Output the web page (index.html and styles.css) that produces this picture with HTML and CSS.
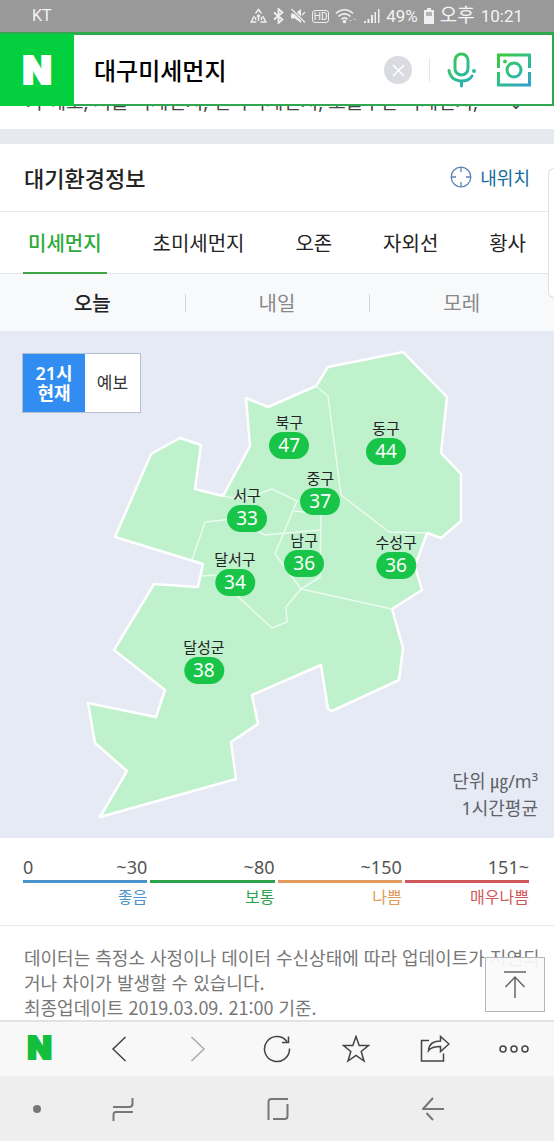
FILE: index.html
```html
<!DOCTYPE html>
<html lang="ko">
<head>
    <meta charset="UTF-8">
    <meta name="viewport" content="width=device-width, initial-scale=1.0">
    <title>대구미세먼지</title>
    <link rel="stylesheet" href="styles.css">
</head>
<body>

<div class="status-bar">
    <span class="carrier">KT</span>
    <div class="status-icons">
        <svg width="17" height="16" viewBox="0 0 17 16" fill="none" stroke="#fff" stroke-width="1.500">
            <path d="M5.500 5.500L8.500 1.500L11.500 5.500M12.800 8L15.800 14H10.500M6.500 14H1.200L4.200 8M5.500 9v3M8.500 7v6M11.500 9v3M7 8.500L8.500 7L10 8.500"/>
        </svg>
        <svg width="11" height="16" viewBox="0 0 11 16" fill="none" stroke="#fff" stroke-width="1.800">
            <path d="M1 4.500L9.500 11.500L5.500 15V1L9.500 4.500L1 11.500"/>
        </svg>
        <svg width="16" height="16" viewBox="0 0 16 16" fill="#fff">
            <path d="M1 5.500h4L11 1v14L5 10.500H1z"/>
            <path d="M1.500 1L15 14.500" stroke="#999" stroke-width="3"/>
            <path d="M1.500 1L15 14.500M12 7l3-3" stroke="#fff" stroke-width="1.300"/>
        </svg>
        <span class="hd">HD</span>
        <svg width="22" height="16" viewBox="0 0 22 16" fill="none" stroke="#fff" stroke-width="1.700">
            <path d="M1 5.500C6 .5 13 .5 18 5.500M3.500 8.500C7 5 12 5 15.500 8.500M6.500 11.300C8.500 9.500 10.500 9.500 12.500 11.300"/>
            <circle cx="9.500" cy="13.500" r="1" fill="#fff"/>
            <path d="M14 12h3l-1.500 2zM18 12h3l-1.500-2z" fill="#ccc" stroke="none"/>
        </svg>
        <svg width="17" height="16" viewBox="0 0 17 16" fill="#fff">
            <path d="M1 13h2v2H1zM4.500 11h2v4h-2zM8 7h2v8H8zM11.500 4h1.500v11h-1.500zM15 1h1.500v14H15z"/>
        </svg>
        <span>49%</span>
        <svg width="10" height="16" viewBox="0 0 10 16">
            <path d="M3 0h4v2h3v14H0V2h3z" fill="#fff"/>
            <path d="M2 4h6v4H2z" fill="#bbb"/>
        </svg>
        <span class="ampm">오후</span>
        <span>10:21</span>
    </div>
</div>

<form class="search-bar">
    <a class="logo" href="#">N</a>
    <input class="search-input" type="text" value="대구미세먼지" aria-label="검색어">
    <button class="clear-btn" type="button" aria-label="지우기">
        <svg width="28" height="28" viewBox="0 0 28 28">
            <circle cx="14" cy="14" r="14" fill="#d9dbe1"/>
            <path d="M9 9l11 11M20 9L9 20" stroke="#fff" stroke-width="1.600"/>
        </svg>
    </button>
    <button class="search-icon" type="button" aria-label="음성검색">
        <svg width="30" height="36" viewBox="0 0 30 36" fill="none" stroke="url(#brand)" stroke-width="3">
            <defs>
                <linearGradient id="brand" x1="0" y1="0" x2="30" y2="36" gradientUnits="userSpaceOnUse">
                    <stop offset="0" stop-color="#3fc830"/>
                    <stop offset=".5" stop-color="#2fc08a"/>
                    <stop offset="1" stop-color="#2f9fd0"/>
                </linearGradient>
            </defs>
            <rect x="8" y="2" width="13" height="21" rx="6.500"/>
            <path d="M2 18.500C4 32 22 31 25 24M14.500 29v5" stroke-linecap="round"/>
            <circle cx="27" cy="19" r="2" fill="#2fb8a0" stroke="none"/>
        </svg>
    </button>
    <button class="search-icon lens" type="button" aria-label="렌즈검색">
        <svg width="34" height="34" viewBox="0 0 34 34" fill="none" stroke="url(#brand)" stroke-width="3">
            <path d="M1.500 15V2H32.500V15M1.500 19V32H32.500V19"/>
            <circle cx="17" cy="17" r="7"/>
            <circle cx="8" cy="8.500" r="2" fill="#3fc860" stroke="none"/>
        </svg>
    </button>
</form>

<p class="related">가 예보, 서울 미세먼지, 전국미세먼지, 오늘부산 미세먼지,<span class="related-more">⌄</span></p>

<main class="air">
    <div class="air-header">
        <h2>대기환경정보</h2>
        <a class="my-location" href="#">
            <svg width="22" height="22" viewBox="0 0 22 22" fill="none" stroke="#5b83b8" stroke-width="1.300">
                <circle cx="11" cy="11" r="9.800"/>
                <path d="M11 1v5M11 16v5M1 11h5M16 11h5"/>
            </svg>
            내위치
        </a>
    </div>

    <nav class="tabs">
        <a class="tab active" href="#">미세먼지</a>
        <a class="tab" href="#">초미세먼지</a>
        <a class="tab" href="#">오존</a>
        <a class="tab" href="#">자외선</a>
        <a class="tab" href="#">황사</a>
    </nav>

    <div class="days">
        <button class="day active" type="button">오늘</button>
        <button class="day" type="button">내일</button>
        <button class="day" type="button">모레</button>
    </div>

    <div class="map">
        <svg class="map-shape" viewBox="0 331 554 507">
            <!-- city outline -->
            <path class="outline" d="M316 386L328 367L403 352L447 397L441 453L461 474V521L441 538L427 533L415 566L422 590L392 609L403 648L399 680L332 711L328 709L321 665L252 695L258 724L231 742L236 779L100 817L127 771L95 743L88 703L156 717L165 690L114 650L154 584L198 587L203 564L115 537L151 454L180 438L201 445L195 489L223 496L250 446L246 398L268 407Z"/>
            <!-- district borders -->
            <path class="border" d="M316 386L328 396L341 495L389 532L427 533"/>
            <path class="border" d="M223 496L233 498H247L272 489L297 501L275 554L301 589L392 609"/>
            <path class="border" d="M192 560L205 522L232 519L265 535L320 530"/>
            <path class="border" d="M294 511L321 514L320 577L301 589L286 607L287 622L272 628L235 594"/>
            <path class="border" d="M200 576L217 575"/>
        </svg>

        <div class="time-switch">
            <button class="time-btn active" type="button">21시 현재</button>
            <button class="time-btn" type="button">예보</button>
        </div>

        <div class="pin bukgu">북구<span class="value">47</span></div>
        <div class="pin donggu">동구<span class="value">44</span></div>
        <div class="pin junggu">중구<span class="value">37</span></div>
        <div class="pin seogu">서구<span class="value">33</span></div>
        <div class="pin namgu">남구<span class="value">36</span></div>
        <div class="pin dalseogu">달서구<span class="value">34</span></div>
        <div class="pin suseonggu">수성구<span class="value">36</span></div>
        <div class="pin dalseonggun">달성군<span class="value">38</span></div>

        <p class="unit">단위 ㎍/m³<br>1시간평균</p>
    </div>

    <div class="legend">
        <div class="level good">
            <div class="range"><span>0</span><span>~30</span></div>
            <div class="grade">좋음</div>
        </div>
        <div class="level normal">
            <div class="range"><span>~80</span></div>
            <div class="grade">보통</div>
        </div>
        <div class="level bad">
            <div class="range"><span>~150</span></div>
            <div class="grade">나쁨</div>
        </div>
        <div class="level very-bad">
            <div class="range"><span>151~</span></div>
            <div class="grade">매우나쁨</div>
        </div>
    </div>

    <div class="notice">
        <p>데이터는 측정소 사정이나 데이터 수신상태에 따라 업데이트가 지연되거나 차이가 발생할 수 있습니다.</p>
        <p>최종업데이트 2019.03.09. 21:00 기준.</p>
        <button class="top-btn" type="button" aria-label="맨 위로">
            <svg width="22" height="28" viewBox="0 0 22 28" fill="none" stroke="#666" stroke-width="1.500">
                <path d="M0 1h22M11 27V6M1.500 16L11 6L20.500 16"/>
            </svg>
        </button>
    </div>
    <div class="side-handle"></div>
</main>

<nav class="toolbar">
    <a class="logo-small" href="#">N</a>
    <button type="button" aria-label="이전">
        <svg width="16" height="26" viewBox="0 0 16 26"><path d="M14.500 1L2 13L14.500 25"/></svg>
    </button>
    <button class="disabled" type="button" aria-label="다음">
        <svg width="16" height="26" viewBox="0 0 16 26"><path d="M1.500 1L14 13L1.500 25"/></svg>
    </button>
    <button type="button" aria-label="새로고침">
        <svg width="28" height="28" viewBox="0 0 28 28"><path d="M26.500 13.500A12.500 12.500 0 1 1 24 6.500M25.500 1.500V7.500H19"/></svg>
    </button>
    <button type="button" aria-label="즐겨찾기">
        <svg width="28" height="28" viewBox="0 0 28 28"><path d="M14 1.500L17.200 10.600H26.500L19.200 16.500L22 26L14 20.400L6 26L8.800 16.500L1.500 10.600H10.800Z"/></svg>
    </button>
    <button type="button" aria-label="공유">
        <svg width="30" height="28" viewBox="0 0 30 28"><path d="M9 5.500H1.500V26H23.500V18.500M8.500 15.500C9 9 13 6 20.500 6V1.500L29 9L20.500 16.500V11.500C15 11.500 11 12 8.500 15.500Z"/></svg>
    </button>
    <button type="button" aria-label="더보기">
        <svg width="30" height="10" viewBox="0 0 30 10"><circle cx="4" cy="5" r="3"/><circle cx="15" cy="5" r="3"/><circle cx="26" cy="5" r="3"/></svg>
    </button>
</nav>

<nav class="system-bar">
    <button type="button" aria-label="숨기기">
        <svg width="10" height="10" viewBox="0 0 10 10"><circle class="dot" cx="5" cy="5" r="4"/></svg>
    </button>
    <button type="button" aria-label="최근 앱">
        <svg width="22" height="24" viewBox="0 0 22 24"><path d="M1 10H17Q20.500 10 20.500 7V1M21 15H4Q1.500 15 1.500 18V24"/></svg>
    </button>
    <button type="button" aria-label="홈">
        <svg width="22" height="24" viewBox="0 0 22 24"><path d="M1.500 23V5Q1.500 2 4.500 2H21M20.500 7V19Q20.500 22 17.500 22H6"/></svg>
    </button>
    <button type="button" aria-label="뒤로">
        <svg width="22" height="24" viewBox="0 0 22 24"><path d="M11 1L1 12H22M4.500 16L11 23"/></svg>
    </button>
</nav>

</body>
</html>
```
FILE: styles.css
```css
* {
    box-sizing: border-box;
}

body {
    margin: 0;
    font-family: "Noto Sans", "Noto Sans CJK KR", sans-serif;
    background-color: #fff;
    color: #222;
}

p, h2 {
    margin: 0;
}

a {
    text-decoration: none;
    color: inherit;
}

button {
    padding: 0;
    border: none;
    background: none;
    font-family: inherit;
    color: inherit;
    cursor: pointer;
}

svg {
    display: block;
}

/* phone status bar */
.status-bar {
    display: flex;
    justify-content: space-between;
    align-items: center;
    height: 32px;
    padding: 0 31px 0 32px;
    background-color: #999;
    color: #f4f4f4;
    font-family: Roboto, "Noto Sans CJK KR", sans-serif;
    font-size: 17px;
    line-height: 32px;
}

.carrier {
    font-size: 16px;
}

.status-icons {
    display: flex;
    align-items: center;
    gap: 6px;
}

.status-icons svg {
    opacity: 0.85;
}

.ampm {
    font-size: 19px;
}

.hd {
    width: 17px;
    border: 1px solid #eee;
    border-radius: 3px;
    font-size: 10px;
    line-height: 11px;
    text-align: center;
}

/* search */
.search-bar {
    display: flex;
    align-items: center;
    height: 74px;
    padding-right: 21px;
    border: solid #2fa84f;
    border-width: 3px 2px 2px 0;
    background-color: #fff;
}

.logo {
    align-self: stretch;
    width: 74px;
    margin: -1px 0 -2px;
    background-color: #03cf3f;
    color: #fff;
    font-family: Inter, sans-serif;
    font-size: 38px;
    font-weight: 900;
    line-height: 72px;
    text-align: center;
    -webkit-text-stroke: 2px #fff;
}

.search-input {
    flex: 1;
    min-width: 0;
    padding: 0 20px;
    border: none;
    outline: none;
    background: none;
    color: #000;
    font-family: inherit;
    font-size: 24px;
    font-weight: 500;
}

.clear-btn {
    padding-right: 18px;
    background: linear-gradient(#e4e4e4, #e4e4e4) right center / 1px 24px no-repeat;
}

.search-icon {
    margin-left: 17px;
}

.search-icon.lens {
    margin-left: 20px;
}

.related {
    display: flex;
    align-items: flex-end;
    justify-content: space-between;
    height: 23px;
    padding: 0 30px 15px 26px;
    overflow: hidden;
    font-size: 19px;
    line-height: 24px;
    white-space: nowrap;
    color: #444;
}

/* air quality card */
.air {
    position: relative;
    border-top: 15px solid #e6eaee;
}

.air-header {
    display: flex;
    justify-content: space-between;
    align-items: center;
    height: 68px;
    padding: 0 24px 2px;
    border-bottom: 1px solid #e6e9ec;
}

.air-header h2 {
    font-size: 22px;
    font-weight: 500;
}

.my-location {
    display: flex;
    align-items: center;
    gap: 8px;
    color: #136b9c;
    font-size: 18px;
}

.tabs {
    display: flex;
    justify-content: space-between;
    height: 62px;
    padding: 0 23px;
    border-bottom: 1px solid #e3e8ec;
}

.tab {
    height: 62px;
    padding: 0 5px;
    font-size: 20px;
    line-height: 64px;
    white-space: nowrap;
}

.tab.active {
    border-bottom: 2px solid #3fa648;
    color: #2faa3c;
    font-weight: 500;
}

.days {
    display: grid;
    grid-template-columns: repeat(3, 1fr);
    height: 57px;
    background-color: #f8f9fb;
}

.day {
    color: #888;
    font-size: 20px;
}

.day + .day {
    background: linear-gradient(#d4d7da, #d4d7da) left center / 1px 18px no-repeat;
}

.day.active {
    color: #222;
    font-weight: 500;
}

/* map */
.map {
    position: relative;
    aspect-ratio: 554 / 507;
    background-color: #e6eaf4;
}

.map-shape {
    width: 100%;
}

.outline {
    fill: #bff1cd;
    stroke: #fff;
    stroke-width: 2.5;
    stroke-linejoin: round;
}

.border {
    fill: none;
    stroke: #eafbef;
    stroke-width: 1.5;
    stroke-linejoin: round;
}

.time-switch {
    position: absolute;
    left: 22px;
    top: 22px;
    display: flex;
    height: 60px;
    border: 1px solid #b4bfd0;
    background-color: #fff;
}

.time-btn {
    width: 55px;
    font-size: 17px;
    line-height: 20px;
    color: #333;
}

.time-btn.active {
    width: 62px;
    padding: 0 10px;
    background-color: #318df2;
    color: #fff;
    font-size: 18px;
    font-weight: 600;
}

.pin {
    position: absolute;
    display: flex;
    flex-direction: column;
    align-items: center;
    transform: translate(-50%, -34px);
    font-size: 15px;
    line-height: 20px;
    white-space: nowrap;
}

.value {
    width: 40px;
    border-radius: 14px;
    background-color: #19c548;
    color: #fff;
    font-size: 19px;
    line-height: 27px;
    text-align: center;
}

.bukgu { left: 52.2%; top: 22.7%; }
.donggu { left: 69.7%; top: 23.9%; }
.junggu { left: 57.8%; top: 33.7%; }
.seogu { left: 44.6%; top: 37.1%; }
.namgu { left: 54.9%; top: 46%; }
.dalseogu { left: 42.4%; top: 49.7%; }
.suseonggu { left: 71.5%; top: 46.3%; }
.dalseonggun { left: 36.8%; top: 67.1%; }

.unit {
    position: absolute;
    right: 16px;
    bottom: 16px;
    color: #5e6268;
    font-size: 18px;
    line-height: 27px;
    text-align: right;
}

/* legend */
.legend {
    display: grid;
    grid-template-columns: repeat(4, 1fr);
    gap: 3px;
    padding: 16px 25px 14px 23px;
    border-bottom: 1px solid #e6e8ea;
}

.range {
    display: flex;
    justify-content: flex-end;
    border-bottom: 3px solid;
    font-size: 18px;
    line-height: 26px;
}

.range span {
    color: #555;
}

.good .range {
    justify-content: space-between;
}

.grade {
    font-size: 16px;
    line-height: 28px;
    text-align: right;
}

.good { color: #4a93cb; }
.normal { color: #2ba24b; }
.bad { color: #e09a5b; }
.very-bad { color: #d1585a; }

.notice {
    position: relative;
    padding: 19px 14px 0 24px;
    color: #777;
    font-family: "Noto Sans CJK KR", sans-serif;
    font-size: 18px;
    line-height: 25px;
}

.top-btn {
    position: absolute;
    right: 9px;
    bottom: 8px;
    display: flex;
    justify-content: center;
    align-items: center;
    width: 60px;
    height: 55px;
    border: 1px solid #b5b5b5;
    background-color: rgba(250, 250, 250, 0.92);
}

.side-handle {
    position: absolute;
    top: 24px;
    right: 0;
    width: 6px;
    height: 130px;
    border: 1px solid #dcdfe3;
    border-right: none;
    border-radius: 6px 0 0 6px;
    background-color: #fff;
}

/* bottom bars */
.toolbar {
    display: grid;
    grid-template-columns: repeat(7, 1fr);
    height: 56px;
    border-top: 2px solid #e2e2e2;
    background-color: #f8f8f8;
}

.toolbar button,
.system-bar button {
    display: flex;
    justify-content: center;
    align-items: center;
}

.toolbar svg {
    fill: none;
    stroke: #444;
    stroke-width: 1.5;
}

.toolbar .disabled svg {
    stroke: #aaa;
}

.logo-small {
    color: #14bf3d;
    font-family: Inter, sans-serif;
    font-size: 32px;
    font-weight: 900;
    line-height: 52px;
    text-align: center;
    -webkit-text-stroke: 2px #14bf3d;
}

.system-bar {
    display: grid;
    grid-template-columns: 18px 1fr 1fr 1fr;
    height: 65px;
    padding: 0 44px 0 28px;
    background-color: #eee;
}

.system-bar svg {
    fill: none;
    stroke: #777;
    stroke-width: 2;
}

.system-bar .dot {
    fill: #777;
    stroke: none;
}
```
